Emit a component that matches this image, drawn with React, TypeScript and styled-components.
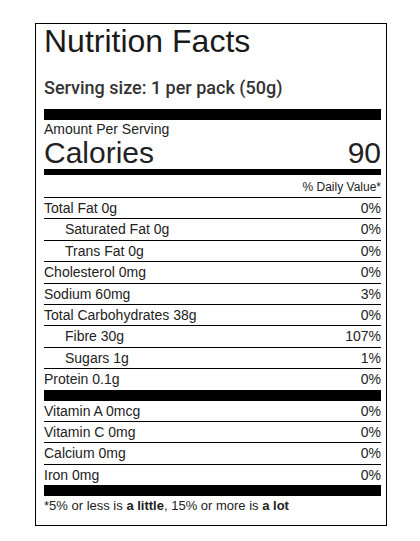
import React from 'react';
import styled, { createGlobalStyle } from 'styled-components';

interface Nutrient {
  label: string;
  value: string;
  indent?: boolean;
}

const GlobalStyle = createGlobalStyle`
  body {
    margin: 0;
    background: #fff;
    font-family: 'Liberation Sans', Arial, sans-serif;
    color: #222;
  }
`;

const Page = styled.div`
  padding: 23px 0 0 35px;
`;

const Label = styled.section`
  box-sizing: border-box;
  width: 352px;
  border: 1px solid #000;
  padding: 0 5px 12px 8px;
`;

const Title = styled.h1`
  margin: 0;
  font-size: 32px;
  line-height: 34px;
  font-weight: 400;
  color: #1a1a1a;
`;

const Serving = styled.p`
  margin: 19px 0 10px;
  font-family: Roboto, 'Liberation Sans', sans-serif;
  font-weight: 500;
  font-size: 18px;
  line-height: 22px;
  color: #333;
`;

const Bar = styled.div<{ $size: number }>`
  height: ${(p) => p.$size}px;
  background: #000;
`;

const Amount = styled.div`
  margin-top: 1px;
  font-size: 14px;
  line-height: 16px;
`;

const CaloriesRow = styled.div`
  display: flex;
  justify-content: space-between;
  font-size: 30px;
  line-height: 32px;
`;

const DailyHead = styled.div`
  padding: 5px 0 3px;
  font-size: 12px;
  line-height: 14px;
  text-align: right;
  border-bottom: 1px solid #000;
`;

const Row = styled.div<{ $indent?: boolean; $last?: boolean }>`
  display: flex;
  justify-content: space-between;
  padding: 2px 0 2px ${(p) => (p.$indent ? '21px' : '0')};
  font-size: 14px;
  line-height: 16.4px;
  border-bottom: ${(p) => (p.$last ? 'none' : '1px solid #000')};
`;

const Footnote = styled.p`
  margin: 0;
  padding-top: 2px;
  font-size: 13px;
  line-height: 15px;

  b {
    font-weight: 700;
  }
`;

const macros: Nutrient[] = [
  { label: 'Total Fat 0g', value: '0%' },
  { label: 'Saturated Fat 0g', value: '0%', indent: true },
  { label: 'Trans Fat 0g', value: '0%', indent: true },
  { label: 'Cholesterol 0mg', value: '0%' },
  { label: 'Sodium 60mg', value: '3%' },
  { label: 'Total Carbohydrates 38g', value: '0%' },
  { label: 'Fibre 30g', value: '107%', indent: true },
  { label: 'Sugars 1g', value: '1%', indent: true },
  { label: 'Protein 0.1g', value: '0%' },
];

const micros: Nutrient[] = [
  { label: 'Vitamin A 0mcg', value: '0%' },
  { label: 'Vitamin C 0mg', value: '0%' },
  { label: 'Calcium 0mg', value: '0%' },
  { label: 'Iron 0mg', value: '0%' },
];

const Rows = ({ items }: { items: Nutrient[] }) => (
  <>
    {items.map((n, i) => (
      <Row key={n.label} $indent={n.indent} $last={i === items.length - 1}>
        <span>{n.label}</span>
        <span>{n.value}</span>
      </Row>
    ))}
  </>
);

export default function App() {
  return (
    <Page>
      <GlobalStyle />
      <Label>
        <Title>Nutrition Facts</Title>
        <Serving>Serving size: 1 per pack (50g)</Serving>
        <Bar $size={11} />
        <Amount>Amount Per Serving</Amount>
        <CaloriesRow>
          <span>Calories</span>
          <span>90</span>
        </CaloriesRow>
        <Bar $size={6} />
        <DailyHead>% Daily Value*</DailyHead>
        <Rows items={macros} />
        <Bar $size={11} />
        <Rows items={micros} />
        <Bar $size={11} />
        <Footnote>
          *5% or less is <b>a little</b>, 15% or more is <b>a lot</b>
        </Footnote>
      </Label>
    </Page>
  );
}
